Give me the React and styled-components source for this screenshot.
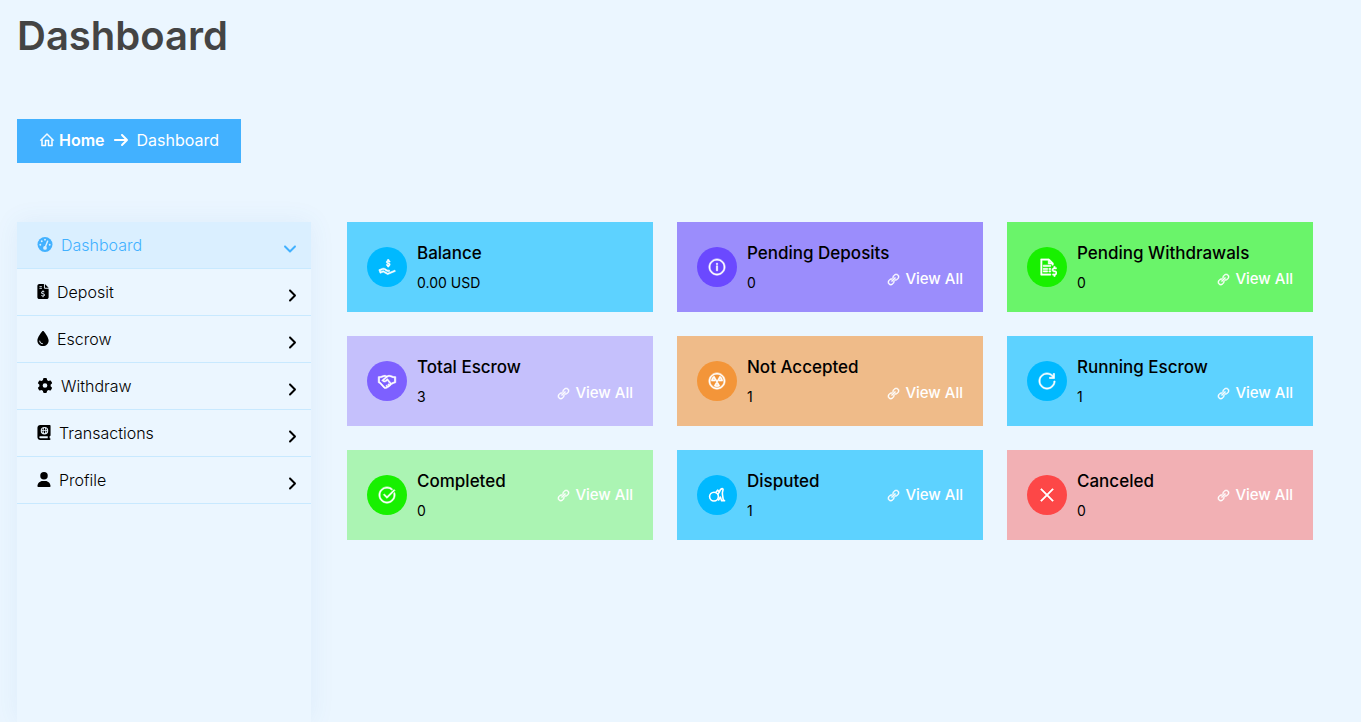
import React from 'react';
import styled, { createGlobalStyle } from 'styled-components';
import {
  LiaHomeSolid,
  LiaLinkSolid,
  LiaHandHoldingUsdSolid,
  LiaInfoCircleSolid,
  LiaFileInvoiceDollarSolid,
  LiaHandshakeSolid,
  LiaRadiationAltSolid,
  LiaRedoAltSolid,
  LiaCheckCircle,
  LiaTimesSolid,
} from 'react-icons/lia';
import {
  FaArrowRight,
  FaFileInvoiceDollar,
  FaDroplet,
  FaGear,
  FaBookAtlas,
  FaUser,
  FaAngleRight,
  FaAngleDown,
} from 'react-icons/fa6';

const GlobalStyle = createGlobalStyle`
  * { box-sizing: border-box; }
  body {
    margin: 0;
    background: #ebf6ff;
    color: #000;
    font-family: Inter, "Open Sans", sans-serif;
    font-size: 16px;
    line-height: 24px;
  }
  a { color: inherit; text-decoration: none; }
`;

const Page = styled.div`
  min-height: 100vh;
  display: flex;
  flex-direction: column;
  padding: 12px 48px 0 17px;
`;

const Title = styled.h1`
  margin: 0 0 59px;
  font-size: 40px;
  line-height: 48px;
  font-weight: 600;
  color: #444;
`;

const Breadcrumb = styled.nav`
  align-self: flex-start;
  display: flex;
  align-items: center;
  gap: 8px;
  height: 44px;
  padding: 0 22px 2px;
  margin-bottom: 59px;
  background: #42b1ff;
  color: #fff;
`;

const HomeLink = styled.a`
  display: flex;
  align-items: center;
  gap: 4px;
  font-weight: 600;
  svg { stroke: currentColor; stroke-width: 1px; }
`;

const Body = styled.div`
  flex: 1;
  display: grid;
  grid-template-columns: 294px minmax(0, 1fr);
  gap: 36px;
`;

const Sidebar = styled.nav`
  box-shadow: 0 0 24px rgba(60, 110, 190, 0.08);
`;

const Menu = styled.ul`
  list-style: none;
  margin: 0;
  padding: 0;
`;

const MenuLink = styled.a`
  display: flex;
  align-items: center;
  gap: 8px;
  height: 47px;
  padding: 0 14px 1px 20px;
  border-bottom: 1px solid #c8e9ff;
  font-weight: 300;
  color: ${(p) => (p.$active ? '#42b1ff' : '#000')};
  background: ${(p) => (p.$active ? '#daefff' : 'transparent')};
`;

const MenuIcon = styled.span`
  display: flex;
  svg { width: ${(p) => p.$width}px; height: 15px; }
`;

const MenuArrow = styled.span`
  display: flex;
  margin-left: auto;
  padding-top: 7px;
  svg { width: ${(p) => (p.$down ? 14 : 10)}px; height: 17px; }
`;

const Cards = styled.main`
  display: grid;
  grid-template-columns: repeat(3, minmax(0, 1fr));
  align-content: start;
  gap: 24px;
`;

const Card = styled.section`
  display: flex;
  align-items: center;
  min-height: 90px;
  padding: 20px;
  background: ${(p) => p.$color};
`;

const Badge = styled.span`
  flex: none;
  display: flex;
  align-items: center;
  justify-content: center;
  width: 40px;
  height: 40px;
  margin-right: 10px;
  border-radius: 50%;
  font-size: 20px;
  color: #fff;
  background: ${(p) => p.$color};
  svg { stroke: currentColor; stroke-width: 1px; }
`;

const CardText = styled.div`
  flex: 1;
  min-width: 0;
  white-space: nowrap;
`;

const CardTitle = styled.h2`
  margin: 0 0 10px;
  font-size: 17px;
  line-height: 22px;
  font-weight: 500;
`;

const CardValue = styled.p`
  margin: 0;
  font-size: 14px;
  line-height: 18px;
`;

const ViewLink = styled.a`
  display: flex;
  align-items: center;
  gap: 4px;
  align-self: ${(p) => (p.$low ? 'flex-end' : 'center')};
  font-size: 15px;
  line-height: 26px;
  font-weight: 500;
  white-space: nowrap;
  color: #fff;
  svg { stroke: currentColor; stroke-width: 1px; }
`;

const DisputeIcon = () => (
  <svg width="20" height="20" viewBox="0 0 20 20" fill="none">
    <g strokeWidth="1.6" strokeLinejoin="round" strokeLinecap="round">
      <circle cx="7" cy="11.6" r="4.4" />
      <path d="M8.8 7.4 10.6 5.2 12.4 6.8 11 9.2" />
      <path d="M12.4 6.8C13 5 13.8 3.6 15.2 3.6C17.2 3.8 15 6.4 15.4 9L16.2 14.6L17.6 15.8H14.6L13.4 12L11.6 15" />
    </g>
  </svg>
);

const GaugeIcon = () => (
  <svg viewBox="0 0 16 16">
    <circle cx="8" cy="8" r="8" fill="currentColor" />
    <path d="M8 11.5 10.8 4.4" stroke="#daefff" strokeWidth="1.5" strokeLinecap="round" />
    <circle cx="8" cy="11.6" r="2" fill="#daefff" />
    <circle cx="8" cy="2.8" r="1" fill="#daefff" />
    <circle cx="4.5" cy="4.5" r="1" fill="#daefff" />
    <circle cx="3" cy="8.2" r="1" fill="#daefff" />
    <circle cx="13" cy="8.2" r="1" fill="#daefff" />
  </svg>
);

const menu = [
  { label: 'Dashboard', Icon: GaugeIcon, width: 16, active: true },
  { label: 'Deposit', Icon: FaFileInvoiceDollar, width: 12 },
  { label: 'Escrow', Icon: FaDroplet, width: 12 },
  { label: 'Withdraw', Icon: FaGear, width: 16 },
  { label: 'Transactions', Icon: FaBookAtlas, width: 14 },
  { label: 'Profile', Icon: FaUser, width: 14 },
];

const cards = [
  { title: 'Balance', value: '0.00 USD', Icon: LiaHandHoldingUsdSolid, bg: '#5dd2ff', badge: '#00b9ff' },
  { title: 'Pending Deposits', value: '0', Icon: LiaInfoCircleSolid, bg: '#9b8dfc', badge: '#6b49ff', link: true, low: true },
  { title: 'Pending Withdrawals', value: '0', Icon: LiaFileInvoiceDollarSolid, bg: '#6af46a', badge: '#18f000', link: true, low: true },
  { title: 'Total Escrow', value: '3', Icon: LiaHandshakeSolid, bg: '#c5c0fc', badge: '#7d60ff', link: true, low: true },
  { title: 'Not Accepted', value: '1', Icon: LiaRadiationAltSolid, bg: '#efbb89', badge: '#f39539', link: true, low: true },
  { title: 'Running Escrow', value: '1', Icon: LiaRedoAltSolid, bg: '#5dd2ff', badge: '#00b9ff', link: true, low: true },
  { title: 'Completed', value: '0', Icon: LiaCheckCircle, bg: '#abf4b3', badge: '#18f000', link: true },
  { title: 'Disputed', value: '1', Icon: DisputeIcon, bg: '#5dd2ff', badge: '#00b9ff', link: true },
  { title: 'Canceled', value: '0', Icon: LiaTimesSolid, bg: '#f2b0b4', badge: '#fd4747', link: true },
];

export default function App() {
  return (
    <>
      <GlobalStyle />
      <Page>
        <Title>Dashboard</Title>
        <Breadcrumb aria-label="Breadcrumb">
          <HomeLink href="#home">
            <LiaHomeSolid />
            Home
          </HomeLink>
          <FaArrowRight />
          <span>Dashboard</span>
        </Breadcrumb>
        <Body>
          <Sidebar aria-label="Account">
            <Menu>
              {menu.map(({ label, Icon, width, active }) => (
                <li key={label}>
                  <MenuLink href={`#${label.toLowerCase()}`} $active={active}>
                    <MenuIcon $width={width}><Icon /></MenuIcon>
                    {label}
                    <MenuArrow $down={active}>{active ? <FaAngleDown /> : <FaAngleRight />}</MenuArrow>
                  </MenuLink>
                </li>
              ))}
            </Menu>
          </Sidebar>
          <Cards>
            {cards.map(({ title, value, Icon, bg, badge, link, low }) => (
              <Card key={title} $color={bg}>
                <Badge $color={badge}><Icon /></Badge>
                <CardText>
                  <CardTitle>{title}</CardTitle>
                  <CardValue>{value}</CardValue>
                </CardText>
                {link && (
                  <ViewLink href="#view" $low={low}>
                    <LiaLinkSolid />
                    View All
                  </ViewLink>
                )}
              </Card>
            ))}
          </Cards>
        </Body>
      </Page>
    </>
  );
}
